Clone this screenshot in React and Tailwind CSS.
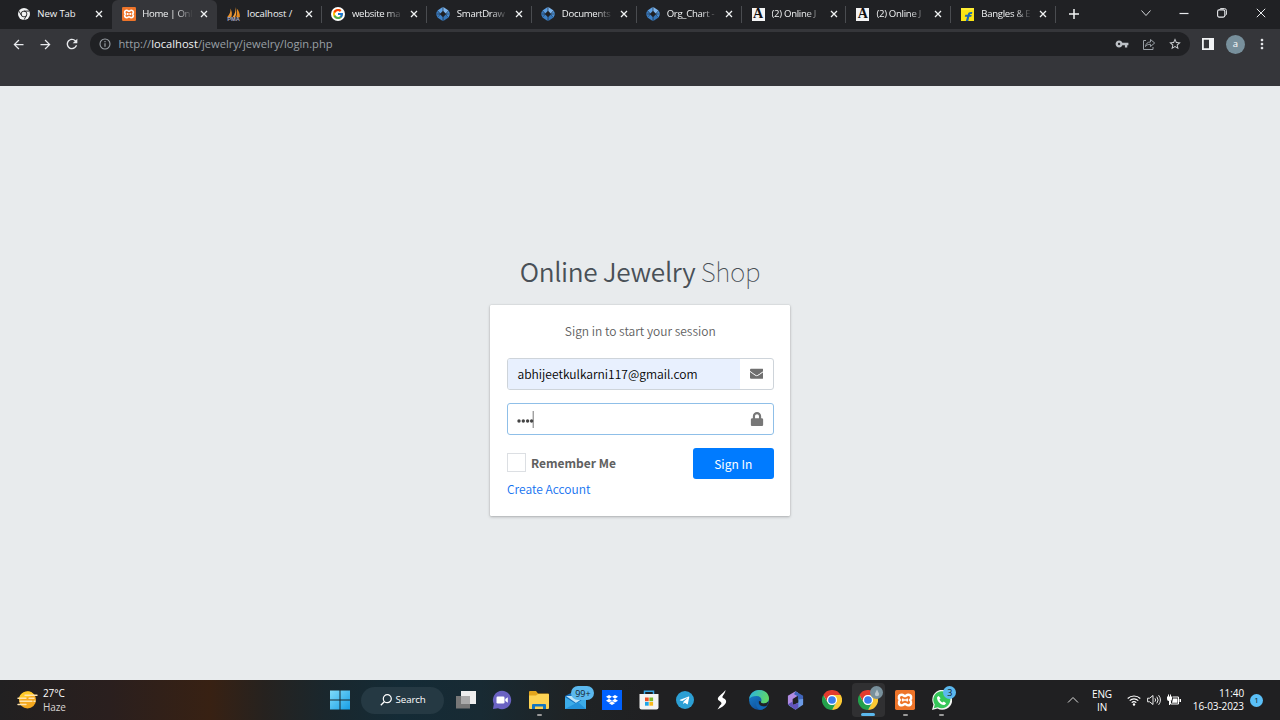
import React from "react";
import { FcGoogle } from "react-icons/fc";
import { FaDropbox, FaTelegramPlane, FaEnvelope, FaLock } from "react-icons/fa";
import { MdVpnKey, MdStarBorder, MdArrowBack, MdArrowForward, MdRefresh, MdMoreVert } from "react-icons/md";

function Chrome({ className, mono = false }) {
  const wedge = "M12 6H22.4A12 12 0 0 0 1.6 6L6.8 15A6 6 0 0 1 12 6z";
  if (mono) {
    return (
      <svg viewBox="0 0 24 24" className={className}>
        <circle cx="12" cy="12" r="12" fill="#f1f3f4" />
        <g fill="none" stroke="#202124" strokeWidth="1.8">
          <circle cx="12" cy="12" r="5.8" />
          <path d="M12 6.2H22M7 15L2 6.4M17 15L12 23.6" />
        </g>
      </svg>
    );
  }
  return (
    <svg viewBox="0 0 24 24" className={className}>
      <circle cx="12" cy="12" r="11" fill="#fff" />
      <path d={wedge} fill="#e33b2e" />
      <path d={wedge} fill="#fcc934" transform="rotate(120 12 12)" />
      <path d={wedge} fill="#23a04b" transform="rotate(240 12 12)" />
      <circle cx="12" cy="12" r="5.8" fill="#fff" />
      <circle cx="12" cy="12" r="4.6" fill="#3b7ded" />
    </svg>
  );
}

function Xampp({ className }) {
  return (
    <svg viewBox="0 0 24 24" className={className}>
      <rect width="24" height="24" rx="2" fill="#ee7429" />
      <path
        d="M8.2 5.6c-4 0-4.6 4.2-2.3 6.4c-2.3 2.2-1.7 6.4 2.3 6.4c2 0 2.4-1.7 3.8-1.7s1.8 1.7 3.8 1.7c4 0 4.6-4.2 2.3-6.4c2.3-2.2 1.7-6.4-2.3-6.4c-2 0-2.4 1.7-3.8 1.7s-1.8-1.7-3.8-1.7z"
        fill="none" stroke="#fff" strokeWidth="2.9"
      />
      <path d="M9.3 10.2v3.6M14.7 10.2v3.6M9.5 12h5" fill="none" stroke="#fff" strokeWidth="1.8" />
    </svg>
  );
}

function PhpMyAdmin({ className }) {
  return (
    <svg viewBox="0 0 28 28" className={className}>
      <path d="M8 3C9 8 8 13 2 19h8C12 13 11 8 8 3z" fill="#e8912c" />
      <path d="M17 0c2 6 0 13-5 19h5c3-6 3-13 0-19z" fill="#f5a03a" />
      <path d="M20 3c4 4 6 9 6 16h-7c2-5 2-11 1-16z" fill="#e58a20" />
      <text x="14" y="27" textAnchor="middle" fontSize="10.5" fontWeight="700" fill="#a9abc0" fontFamily="Liberation Sans">PMA</text>
    </svg>
  );
}

function SmartDraw({ className }) {
  return (
    <svg viewBox="0 0 24 24" className={className}>
      <path d="M11.5 0v7L7.500 11L2.500 6z" fill="#5c9fe3" />
      <path d="M12.500 0v7l4 4l5-5z" fill="#7db5ed" />
      <path d="M0 11.500l2-5l5 5zM0 12.500h7L2.500 18z" fill="#3779bd" />
      <path d="M24 11.500l-2-5l-5 5zM24 12.500h-7l4.500 5.500z" fill="#4a8fd4" />
      <path d="M11.500 24v-7L7.500 13l-5 5z" fill="#3d80c5" />
      <path d="M12.500 24v-7l4-4l5 5z" fill="#3475b8" />
    </svg>
  );
}

function LetterA() {
  return (
    <span className="flex size-[13px] items-center justify-center overflow-hidden bg-[#f4f4f4] font-['Liberation_Serif',serif] text-[14px] leading-none font-bold text-[#111]">A</span>
  );
}

function Flipkart({ className }) {
  return (
    <svg viewBox="0 0 24 24" className={className}>
      <path d="M0 2l2-2h20l2 2v22H0z" fill="#f9e315" />
      <path d="M0 0h24v4H0z" fill="#ffee35" />
      <path d="M9 24l2.300-8H7l1-3.500h4.300c1-4.500 3.500-5.500 8.700-5l-1 3.700c-2.800-.3-3.300.3-3.700 1.800h3.500l-1 3h-3.500L13.500 24z" fill="#1c68b5" />
    </svg>
  );
}

const tabs = [
  { title: "New Tab", icon: <Chrome mono className="size-[12px]" /> },
  { title: "Home | Onl", icon: <Xampp className="size-[14px]" />, active: true, clip: true },
  { title: "localhost /", icon: <PhpMyAdmin className="size-[15px]" /> },
  { title: "website ma", icon: <span className="flex size-[14px] items-center justify-center rounded-full bg-white"><FcGoogle className="size-[12px]" /></span>, clip: true },
  { title: "SmartDraw", icon: <SmartDraw className="size-[14px]" />, clip: true },
  { title: "Documents", icon: <SmartDraw className="size-[14px]" />, clip: true },
  { title: "Org_Chart -", icon: <SmartDraw className="size-[14px]" />, clip: true },
  { title: "(2) Online J", icon: <LetterA />, clip: true },
  { title: "(2) Online J", icon: <LetterA />, clip: true },
  { title: "Bangles & E", icon: <Flipkart className="size-[13px]" />, clip: true },
];

function Tab({ tab, divider }) {
  return (
    <div className={tab.active
      ? "relative flex h-[29px] w-[104.9px] items-center rounded-t-[6px] bg-[#35363a] pl-[9px]"
      : "relative flex h-[29px] w-[104.9px] items-center pl-[9px]"}>
      <span className="flex w-[15px] shrink-0 justify-center">{tab.icon}</span>
      <span className={tab.clip
        ? "ml-[6px] w-[52px] shrink-0 text-[9.6px] leading-[14px] tracking-[-0.3px] whitespace-nowrap text-[#f1f3f4] [mask-image:linear-gradient(to_right,black_65%,transparent_98%)]"
        : "ml-[6px] w-[52px] shrink-0 text-[9.6px] leading-[14px] tracking-[-0.1px] whitespace-nowrap text-[#f1f3f4]"}>
        {tab.title}
      </span>
      <svg viewBox="0 0 8 8" className="ml-[6px] size-[8px] shrink-0"><path d="M1 1l6 6M7 1L1 7" stroke="#f1f3f4" strokeWidth="1.3" /></svg>
      {divider && <span className="absolute top-[6px] right-0 h-[17px] w-px bg-[#4a4c50]" />}
    </div>
  );
}

function TabStrip() {
  return (
    <div className="flex h-[29px] items-center bg-[#202124] pb-px pl-[7.3px]">
      {tabs.map((t, i) => <Tab key={i} tab={t} divider={i >= 2} />)}
      <svg viewBox="0 0 12 12" className="ml-[11.500px] size-[12px]"><path d="M6 1v10M1 6h10" stroke="#f1f3f4" strokeWidth="1.5" /></svg>
      <div className="ml-auto flex items-center pb-[2px] text-[#e8eaed]">
        <svg viewBox="0 0 10 10" className="mr-[28px] size-[10px]"><path d="M.5 2.500L5 7.500l4.500-5" fill="none" stroke="currentColor" strokeWidth=".9" /></svg>
        <svg viewBox="0 0 10 10" className="mr-[28px] size-[10px]"><path d="M.5 5.500h9" stroke="currentColor" strokeWidth="1.2" /></svg>
        <svg viewBox="0 0 10 10" className="mr-[29px] size-[10px]"><path d="M2.700 1.500Q3 .6 4 .6h3.500Q9.400.6 9.400 2.500V6q0 1-1 1.300" fill="none" stroke="currentColor" strokeWidth="1" /><rect x=".6" y="1.900" width="7.200" height="7.200" rx="1.500" fill="none" stroke="currentColor" strokeWidth="1.100" /></svg>
        <svg viewBox="0 0 10 10" className="mr-[14px] size-[10px]"><path d="M.8.8l8.400 8.400M9.200.8L.8 9.200" stroke="currentColor" strokeWidth="1" /></svg>
      </div>
    </div>
  );
}

function Toolbar() {
  return (
    <div className="flex h-[57px] items-start bg-[#35363a] pt-[3px]">
      <div className="flex h-[24px] flex-1 items-center">
        <MdArrowBack className="ml-[11px] size-[15px] text-[#e8eaed]" />
        <MdArrowForward className="ml-[12px] size-[15px] text-[#e8eaed]" />
        <MdRefresh className="ml-[11px] size-[16px] text-[#e8eaed]" />
        <div className="ml-[10px] flex h-[24px] w-[1100px] items-center rounded-full bg-[#202124] pr-[8px] pl-[9px]">
          <svg viewBox="0 0 12 12" className="size-[12px]"><circle cx="6" cy="6" r="5" fill="none" stroke="#9aa0a6" strokeWidth="1.100" /><path d="M6 5.300v3.500M6 3v1.300" stroke="#9aa0a6" strokeWidth="1.200" /></svg>
          <span className="ml-[7.500px] text-[11.150px] leading-[16px] text-[#9aa0a6]">http://<span className="text-[#f1f3f4]">localhost</span>/jewelry/jewelry/login.php</span>
          <MdVpnKey className="ml-auto size-[14px] text-[#bdc1c6]" />
          <svg viewBox="0 0 14 14" className="ml-[13px] size-[14px]"><path d="M4 3.500H1.500v9h9.500V10M3.500 9.500c.5-3 2-4.500 5-4.500V2.500L12.700 6L8.500 9.500V7.300c-2.500 0-4 .7-5 2.200z" fill="none" stroke="#9aa0a6" strokeWidth="1" /></svg>
          <MdStarBorder className="ml-[12px] size-[14px] text-[#cdd0d4]" />
        </div>
        <svg viewBox="0 0 12 12" className="ml-[12px] size-[12px]"><path d="M0 0h12v12H0zM1.800 1.800v8.400h5.200V1.800z" fill="#f1f3f4" fillRule="evenodd" /></svg>
        <span className="ml-[12px] flex size-[19px] items-center justify-center rounded-full bg-[#78909c] pb-px text-[9.500px] leading-none text-white">a</span>
        <MdMoreVert className="ml-[9px] size-[16px] text-[#e8eaed]" />
      </div>
    </div>
  );
}

function LoginCard() {
  return (
    <div className="h-[211px] w-[300px] rounded-[1px] bg-white pt-[16px] pr-[16.500px] pl-[17px] font-['Noto_Sans_CJK_SC',sans-serif] text-[12px] font-[350] text-[#606060] shadow-[0_0_1px_rgba(0,0,0,.25),0_1px_3px_rgba(0,0,0,.25)]">
      <p className="h-[20px] text-center leading-[20px] whitespace-nowrap">Sign in to start your session</p>
      <div className="mt-[17px] flex h-[32px] overflow-hidden rounded-[3px] border border-[#ced4da]">
        <span className="flex w-[232px] items-center bg-[#e8f0fe] pl-[9.500px] text-[12.050px] text-black">abhijeetkulkarni117@gmail.com</span>
        <span className="flex flex-1 items-center justify-center"><FaEnvelope className="size-[13.500px] text-[#6f6f6f]" /></span>
      </div>
      <div className="mt-[13px] flex h-[32px] items-center rounded-[3px] border border-[#8fbfe8] pr-[8.500px] pl-[9px]">
        <svg viewBox="0 0 17 17" className="size-[17px]">
          <g fill="#444"><circle cx="2" cy="10" r="1.700" /><circle cx="6.300" cy="10" r="1.700" /><circle cx="10.600" cy="10" r="1.700" /><circle cx="14.600" cy="10" r="1.700" /></g>
          <path d="M16.200 0v17" stroke="#555" strokeWidth=".8" />
        </svg>
        <FaLock className="ml-auto size-[14px] text-[#777]" />
      </div>
      <div className="mt-[13px] flex h-[31px] items-start">
        <span className="mt-[5px] size-[19px] border border-[#dcdfe3]" />
        <span className="mt-[5px] ml-[5px] leading-[20px] font-bold whitespace-nowrap">Remember Me</span>
        <button className="ml-auto h-[31px] w-[80.500px] rounded-[3px] bg-[#007bff] text-[12px] font-normal text-white">Sign In</button>
      </div>
      <a className="block leading-[20px] text-[#1070f0]">Create Account</a>
    </div>
  );
}

function TaskItem({ children, mark }) {
  return (
    <div className="relative flex h-[40px] w-[36.600px] shrink-0 items-center justify-center">
      {children}
      {mark && <span className="absolute bottom-[4px] h-[2px] w-[5px] rounded-full bg-[#9a9a9a]" />}
    </div>
  );
}

function Taskbar() {
  return (
    <div className="flex h-[40px] items-center bg-[linear-gradient(to_right,#212021_0,#2a1f1e_110px,#382113_210px,#26221f_265px,#1a272d_325px,#142b36_400px,#182a33_480px,#1f2325_570px,#202022_650px,#202022_100%)] text-white">
      <svg viewBox="0 0 22 20" className="ml-[17px] h-[20px] w-[22px]">
        <circle cx="10.500" cy="10" r="8.500" fill="#f5a81e" />
        <path d="M2 10a8.500 8.500 0 0 1 15.500-5z" fill="#ffc928" />
        <path d="M8 5.300h12M1 8.300h8M12 8.300h5M3 11.300h12M17 11.300h1M1 14.500h8" stroke="#ffe3ad" strokeWidth="1.400" strokeLinecap="round" />
      </svg>
      <div className="ml-[4px] w-[279px] pt-px text-[10px] leading-[13.500px] tracking-[-0.100px]"><div>27°C</div><div className="text-[#d8d4d2]">Haze</div></div>
      <TaskItem>
        <svg viewBox="0 0 20 20" className="size-[20px]">
          <defs><linearGradient id="win" x2="1" y2="1" gradientUnits="objectBoundingBox"><stop stopColor="#80dcfb" /><stop offset="1" stopColor="#169de5" /></linearGradient></defs>
          <path d="M0 .5h9.500v9H0zM10.500.5H20v9h-9.500zM0 10.500h9.500v9H0zM10.500 10.500H20v9h-9.500z" fill="url(#win)" />
        </svg>
      </TaskItem>
      <div className="ml-[2px] flex h-[27px] w-[83px] shrink-0 items-center rounded-full bg-[#253943] pl-[19px]">
        <svg viewBox="0 0 12 12" className="size-[12px]"><circle cx="7.300" cy="4.700" r="4" fill="none" stroke="#fff" strokeWidth="1.200" /><path d="M4.300 7.700L.8 11.200" stroke="#fff" strokeWidth="1.300" /></svg>
        <span className="ml-[4px] text-[9.700px] leading-none tracking-[-0.100px]">Search</span>
      </div>
      <div className="ml-[4px] flex">
        <TaskItem>
          <svg viewBox="0 0 20 18" className="h-[18px] w-[20px]"><rect x="5" width="15" height="13" fill="#eee" /><rect y="5" width="14" height="12.500" fill="#777" /><path d="M5 5h9v8H5z" fill="#aaa" /></svg>
        </TaskItem>
        <TaskItem>
          <svg viewBox="0 0 20 20" className="size-[20px]"><path d="M10 .8a9.200 9.200 0 1 1-4 17.500L1 19l.8-5A9.200 9.200 0 0 1 10 .8z" fill="#6a62c2" /><rect x="4.500" y="6.500" width="8" height="7" rx="1.200" fill="#fff" /><path d="M13.300 9l2.500-1.800v5.600L13.300 11z" fill="#fff" /></svg>
        </TaskItem>
        <TaskItem mark>
          <svg viewBox="0 0 20 18" className="h-[18px] w-[20px]"><path d="M0 1a1 1 0 0 1 1-1h6l2 2.500h10a1 1 0 0 1 1 1V9H0z" fill="#e2a51c" /><path d="M0 4.500h7l2-1.500h10a1 1 0 0 1 1 1V17a1 1 0 0 1-1 1H1a1 1 0 0 1-1-1z" fill="#fcd354" /><path d="M3 18v-4a1 1 0 0 1 1-1h12a1 1 0 0 1 1 1v4h-3v-2.500H6V18z" fill="#1375be" /></svg>
        </TaskItem>
        <TaskItem>
          <svg viewBox="0 0 22 18" className="h-[18px] w-[22px]"><path d="M0 5L10 0l11 5v13H0z" fill="#1670bd" /><path d="M1 5h20L11 12z" fill="#bfe5f8" /><path d="M0 6l11 7l10-7v12H0z" fill="#3cace9" /><path d="M0 18l13-7l8 7z" fill="#2492da" /></svg>
          <span className="absolute top-[6px] left-[14px] flex h-[14px] w-[23px] items-center justify-center rounded-full bg-[#5bb8ee] text-[9px] leading-none text-[#14232c]">99+</span>
        </TaskItem>
        <TaskItem><span className="flex size-[20px] items-center justify-center bg-[#0061fe]"><FaDropbox className="size-[12px]" /></span></TaskItem>
        <TaskItem>
          <svg viewBox="0 0 20 20" className="size-[20px]"><path d="M5.500 5V1.300h9V5" fill="none" stroke="#36a5e6" strokeWidth="1.500" /><path d="M.5 4h19v13.500a2 2 0 0 1-2 2h-15a2 2 0 0 1-2-2z" fill="#f3f3f3" /><path d="M6 7.500h3.700v3.700H6z" fill="#ef5125" /><path d="M10.400 7.500h3.700v3.700h-3.700z" fill="#7bb829" /><path d="M6 12h3.700v3.700H6z" fill="#1ea4e8" /><path d="M10.400 12h3.700v3.700h-3.700z" fill="#fbb81a" /></svg>
        </TaskItem>
        <TaskItem><span className="flex size-[18px] items-center justify-center rounded-full bg-[#2c9fd4] pr-px"><FaTelegramPlane className="size-[11px]" /></span></TaskItem>
        <TaskItem><svg viewBox="0 0 12 20" className="h-[20px] w-[12px]"><path d="M9.500 0C8 2 6 3.500 3 6.500c-2 2-1 3.500.5 4.500c2 1.300 3 2.500.5 4.500L1.500 19.500C5 17.500 9 15.500 10 12.500c.6-2-.5-3.200-2.500-4.200c-1.500-.8-1.300-1.800-.3-3.100C8.500 3.500 9.300 2 9.500 0z" fill="#fff" /></svg></TaskItem>
        <TaskItem>
          <svg viewBox="0 0 20 20" className="size-[20px]">
            <defs><linearGradient id="edgeTop" x2="1" y2=".3"><stop stopColor="#27b1e7" /><stop offset="1" stopColor="#5fd66a" /></linearGradient><linearGradient id="edgeLow" x2=".7" y2="1"><stop stopColor="#1886d4" /><stop offset="1" stopColor="#104a94" /></linearGradient></defs>
            <circle cx="10" cy="10" r="10" fill="url(#edgeLow)" />
            <path d="M.1 9C1 3.500 5 0 10 0c6 0 10 4 10 8.500c0 3-2.500 5-5.500 5c-2 0-3-1-2.300-2c1-2.500-.7-5.500-4.700-5.500C4 6 1.500 7 .1 9z" fill="url(#edgeTop)" />
            <path d="M8.500 9.500c-1 3 1.500 7.500 7 7c1 0 2-.4 3-1c-1 1.500-3.500 4-7 4.300C7.500 19 5 13 8.500 9.500z" fill="#1266b5" />
            <path d="M12 11.500c-.7 1 .5 2 2.500 2c2 0 3.700-1 4.800-2.300c-.2 2-1 3.500-1.800 4.500c-4.500 1.800-8.500-1-7.500-4.700z" fill="#202124" />
          </svg>
        </TaskItem>
        <TaskItem>
          <svg viewBox="0 0 20 20" className="size-[19px]"><path d="M10 .3L2 5v9l5 3V8.500L12.500 5V1.500z" fill="#b08be2" /><path d="M10 .3L18 5v7.500L12.500 9V5.500L8.500 3.500z" fill="#3f64ba" /><path d="M18 8.500v6L10 19.700L2.500 15l6-.5L13 12V9z" fill="#6c9be6" /><path d="M2 14l5-3v3.500l6-2v4.500L10 19.700z" fill="#6253bb" /></svg>
        </TaskItem>
        <TaskItem><Chrome className="size-[20px]" /></TaskItem>
        <TaskItem>
          <span className="absolute inset-x-[2px] inset-y-[3px] rounded-[4px] bg-[#303032]" />
          <Chrome className="relative size-[20px]" />
          <span className="absolute top-[6px] left-[20px] flex size-[13px] items-center justify-center rounded-full bg-[#78909c]"><svg viewBox="0 0 8 8" className="size-[8px]"><path d="M4 .5L6.200 5a2.200 2.200 0 1 1-4.400 0z" fill="#b8c4ca" /></svg></span>
          <span className="absolute bottom-[4px] h-[3px] w-[14px] rounded-full bg-[#5bb8ee]" />
        </TaskItem>
        <TaskItem mark><Xampp className="size-[20px]" /></TaskItem>
        <TaskItem mark>
          <svg viewBox="0 0 20 20" className="size-[20px]"><path d="M0 20l1.500-5.500A10 10 0 1 1 5.500 18.500z" fill="#f4f4f4" /><path d="M1.800 18.200l1-3.700a8.500 8.500 0 1 1 3 2.700z" fill="#35c659" /></svg>
          <svg viewBox="0 0 24 24" className="absolute top-[15px] left-[13px] size-[11px]"><path d="M6 2L2.500 4.500C1 13 10 23 19.500 21.500L22 18l-5-4l-3 2.500C11 15 9 13 7.700 10L10 7z" fill="#fff" /></svg>
          <span className="absolute top-[6px] left-[20px] flex size-[13px] items-center justify-center rounded-full bg-[#5bb8ee] text-[9px] leading-none text-[#14232c]">3</span>
        </TaskItem>
      </div>
      <div className="ml-auto flex items-center">
        <svg viewBox="0 0 12 8" className="mr-[12px] h-[8px] w-[12px]"><path d="M1 6.500l5-5l5 5" fill="none" stroke="#ddd" /></svg>
        <div className="w-[22px] pt-px text-center text-[10px] leading-[13px] tracking-[-0.100px]"><div>ENG</div><div>IN</div></div>
        <svg viewBox="0 0 14 12" className="ml-[14px] h-[12px] w-[14px]"><g fill="none" stroke="#fff"><path d="M.7 4.500a9 9 0 0 1 12.600 0M2.700 6.700a6 6 0 0 1 8.600 0M4.700 8.700a3.300 3.300 0 0 1 4.600 0" strokeWidth="1.100" /></g><circle cx="7" cy="10.500" r="1.200" fill="#fff" /></svg>
        <svg viewBox="0 0 14 12" className="ml-[6px] h-[12px] w-[14px]"><g fill="none" stroke="#fff" strokeWidth=".9"><path d="M.6 4.200h2L6 1.500v9L2.600 7.800h-2zM8 4.300q1.300 1.700 0 3.400M9.800 2.700q2.600 3.300 0 6.600M11.600 1.200q3.700 4.800 0 9.600" /></g></svg>
        <svg viewBox="0 0 14 12" className="ml-[6px] h-[12px] w-[14px]"><path d="M5.500 3h6v7h-8V7" fill="none" stroke="#fff" /><path d="M6 4.500h4.500v4.300H5z M12.500 5H14v3h-1.500z M0 2.500h5V5Q5 7 3 7v4H2V7Q0 7 0 5z M1 .5h1v2H1z M3 .5h1v2H3z" fill="#fff" /></svg>
        <div className="ml-[10px] w-[53px] text-right text-[10px] leading-[13px] tracking-[-0.100px] whitespace-nowrap"><div>11:40</div><div>16-03-2023</div></div>
        <span className="mr-[17px] ml-[6px] flex size-[13px] items-center justify-center rounded-full bg-[#5bc0f8] text-[8px] leading-none text-[#15242c]">1</span>
      </div>
    </div>
  );
}

export default function App() {
  return (
    <div className="flex h-[720px] w-[1280px] flex-col overflow-hidden bg-[#e9ecef] font-['Open_Sans','Noto_Sans',sans-serif]">
      <TabStrip />
      <Toolbar />
      <main className="flex flex-1 flex-col items-center bg-[#e8ebed] pt-[167px]">
        <h1 className="mb-[16px] h-[36px] font-['Noto_Sans_CJK_SC',sans-serif] text-[26.200px] leading-[36px] font-[350] tracking-[-0.350px] whitespace-nowrap text-[#495057]">
          Online Jewelry <span className="font-thin">Shop</span>
        </h1>
        <LoginCard />
      </main>
      <Taskbar />
    </div>
  );
}
